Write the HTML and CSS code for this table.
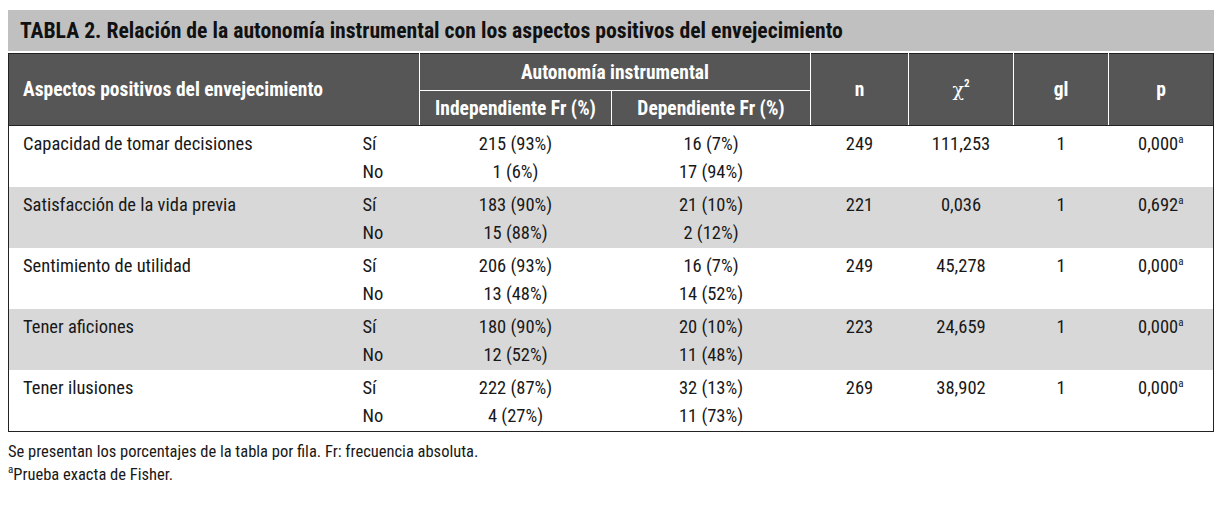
FILE: index.html
```html
<!DOCTYPE html>
<html lang="es">
<head>
<meta charset="utf-8">
<title>Tabla 2</title>
<link rel="stylesheet" href="styles.css">
</head>
<body>
<div class="title-bar"><h1 class="title">TABLA 2. Relación de la autonomía instrumental con los aspectos positivos del envejecimiento</h1></div>
<table class="data">
  <colgroup>
    <col class="c-label"><col class="c-yn"><col class="c-ind"><col class="c-dep"><col class="c-n"><col class="c-chi"><col class="c-gl"><col class="c-p">
  </colgroup>
  <thead>
    <tr class="h1">
      <th colspan="2" rowspan="2" class="th-left">Aspectos positivos del envejecimiento</th>
      <th colspan="2">Autonomía instrumental</th>
      <th rowspan="2">n</th>
      <th rowspan="2"><span class="chi">χ</span><sup class="chi-sup">2</sup></th>
      <th rowspan="2">gl</th>
      <th rowspan="2">p</th>
    </tr>
    <tr class="h2">
      <th>Independiente Fr (%)</th>
      <th>Dependiente Fr (%)</th>
    </tr>
  </thead>
  <tbody class="grp">
    <tr class="first"><td class="lbl">Capacidad de tomar decisiones</td><td class="yn">Sí</td><td>215 (93%)</td><td>16 (7%)</td><td>249</td><td>111,253</td><td>1</td><td>0,000<sup>a</sup></td></tr>
    <tr class="second"><td></td><td class="yn">No</td><td>1 (6%)</td><td>17 (94%)</td><td></td><td></td><td></td><td></td></tr>
  </tbody>
  <tbody class="grp shaded">
    <tr class="first"><td class="lbl">Satisfacción de la vida previa</td><td class="yn">Sí</td><td>183 (90%)</td><td>21 (10%)</td><td>221</td><td>0,036</td><td>1</td><td>0,692<sup>a</sup></td></tr>
    <tr class="second"><td></td><td class="yn">No</td><td>15 (88%)</td><td>2 (12%)</td><td></td><td></td><td></td><td></td></tr>
  </tbody>
  <tbody class="grp">
    <tr class="first"><td class="lbl">Sentimiento de utilidad</td><td class="yn">Sí</td><td>206 (93%)</td><td>16 (7%)</td><td>249</td><td>45,278</td><td>1</td><td>0,000<sup>a</sup></td></tr>
    <tr class="second"><td></td><td class="yn">No</td><td>13 (48%)</td><td>14 (52%)</td><td></td><td></td><td></td><td></td></tr>
  </tbody>
  <tbody class="grp shaded">
    <tr class="first"><td class="lbl">Tener aficiones</td><td class="yn">Sí</td><td>180 (90%)</td><td>20 (10%)</td><td>223</td><td>24,659</td><td>1</td><td>0,000<sup>a</sup></td></tr>
    <tr class="second"><td></td><td class="yn">No</td><td>12 (52%)</td><td>11 (48%)</td><td></td><td></td><td></td><td></td></tr>
  </tbody>
  <tbody class="grp">
    <tr class="first"><td class="lbl">Tener ilusiones</td><td class="yn">Sí</td><td>222 (87%)</td><td>32 (13%)</td><td>269</td><td>38,902</td><td>1</td><td>0,000<sup>a</sup></td></tr>
    <tr class="second"><td></td><td class="yn">No</td><td>4 (27%)</td><td>11 (73%)</td><td></td><td></td><td></td><td></td></tr>
  </tbody>
</table>
<div class="notes">
  <p>Se presentan los porcentajes de la tabla por fila. Fr: frecuencia absoluta.</p>
  <p><sup>a</sup>Prueba exacta de Fisher.</p>
</div>
</body>
</html>
```

FILE: styles.css
```css
* { box-sizing: border-box; }
html, body { background: #fff; }
body {
  margin: 10px 3px 0 8px;
  font-family: "Roboto Condensed", "Liberation Sans", Arial, sans-serif;
  color: #181818;
}
.title-bar {
  background: #c0c0c0;
  height: 41px;
  display: flex;
  align-items: center;
  padding-left: 12px;
}
.title {
  margin: 0;
  font-size: 21.7px;
  font-weight: bold;
  color: #111;
}
.data {
  margin-top: 2px;
  width: 1205px;
  border-collapse: collapse;
  table-layout: fixed;
  border: 1px solid #222;
  font-size: 18.5px;
}
.c-label { width: 342px; }
.c-yn { width: 69px; }
.c-ind { width: 192px; }
.c-dep { width: 199px; }
.c-n { width: 98px; }
.c-chi { width: 105px; }
.c-gl { width: 95px; }
.c-p { width: 105px; }
thead th {
  background: #565656;
  color: #fff;
  font-weight: bold;
  font-size: 19.5px;
  border: 1px solid #fff;
  text-align: center;
  padding: 0;
}
thead tr:first-child th { border-top: none; }
thead tr.h1 th:first-child { border-left: none; }
thead tr.h1 th:last-child { border-right: none; }
thead tr.h2 th { border-bottom: 1px solid #222; }
thead tr.h1 th[rowspan] { border-bottom: 1px solid #222; }
.h1 { height: 37px; }
.h2 { height: 35px; }
.th-left { text-align: left; padding-left: 14px; }
.chi { font-family: "DejaVu Serif", "Liberation Serif", serif; font-weight: normal; font-size: 19px; font-style: normal; }
.chi-sup { font-size: 11px; vertical-align: 9px; }
tbody td {
  padding: 0;
  text-align: center;
  line-height: 28px;
  height: 28px;
  white-space: nowrap;
}
tbody tr.first td { padding-top: 4px; height: 32px; }
tbody tr.second td { height: 29px; padding-bottom: 1px; }
tbody.shaded td { background: #d8d8d8; }
td.lbl { text-align: left; padding-left: 14px; }
td.yn { text-align: left; padding-left: 12px; }
sup { font-size: 11px; vertical-align: 7px; line-height: 0; }
.notes {
  margin-top: 8px;
  font-size: 16.5px;
  line-height: 23px;
}
.notes p { margin: 0; }
```
